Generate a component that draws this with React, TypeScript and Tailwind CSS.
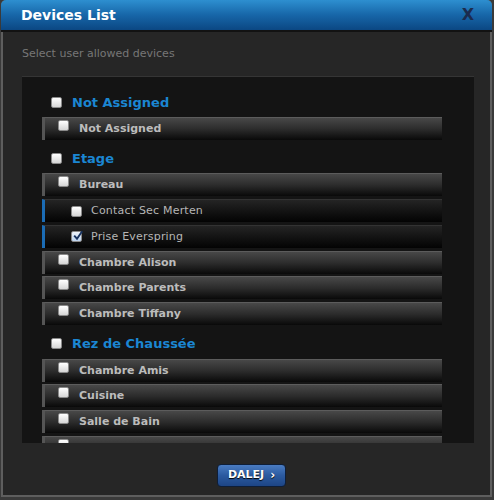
type Item =
  | { kind: 'group'; label: string }
  | { kind: 'room'; label: string }
  | { kind: 'device'; label: string; checked?: boolean }

const items: Item[] = [
  { kind: 'group', label: 'Not Assigned' },
  { kind: 'room', label: 'Not Assigned' },
  { kind: 'group', label: 'Etage' },
  { kind: 'room', label: 'Bureau' },
  { kind: 'device', label: 'Contact Sec Merten' },
  { kind: 'device', label: 'Prise Everspring', checked: true },
  { kind: 'room', label: 'Chambre Alison' },
  { kind: 'room', label: 'Chambre Parents' },
  { kind: 'room', label: 'Chambre Tiffany' },
  { kind: 'group', label: 'Rez de Chaussée' },
  { kind: 'room', label: 'Chambre Amis' },
  { kind: 'room', label: 'Cuisine' },
  { kind: 'room', label: 'Salle de Bain' },
  { kind: 'room', label: '' },
]

function Box({ checked }: { checked?: boolean }) {
  return (
    <span
      className={
        'relative block w-[11px] h-[11px] shrink-0 rounded-[2px] border border-[#8a8a8a] ' +
        (checked ? 'bg-gradient-to-b from-[#eef4fb] to-[#bcd3ee]' : 'bg-gradient-to-b from-white to-[#d6d6d6]')
      }
    >
      {checked && (
        <svg viewBox="0 0 10 10" className="absolute left-[1px] top-[-2px] w-[10px] h-[11px]">
          <path d="M1.2 5.2 L4 8.2 L9.2 0.8" fill="none" stroke="#17325f" strokeWidth="1.9" />
        </svg>
      )}
    </span>
  )
}

function Row({ item }: { item: Item }) {
  if (item.kind === 'group') {
    return (
      <div className="flex items-center h-[30.5px] pl-[9px] pt-[1px]">
        <Box />
        <span className="ml-[10px] text-[13px] font-bold text-[#1b86d2]">{item.label}</span>
      </div>
    )
  }
  if (item.kind === 'room') {
    return (
      <div className="flex h-[23px] mb-[2.8px] border-t border-[#5c5c5c] border-l-[3px] border-l-[#555] bg-[linear-gradient(#484848,#2c2c2c_50%,#090909)]">
        <div className="pl-[13px] pt-[2px]">
          <Box />
        </div>
        <span className="ml-[10px] mt-[4px] text-[11px] font-bold text-[#bcbcbc] leading-[14px]">{item.label}</span>
      </div>
    )
  }
  return (
    <div className="flex items-center h-[23px] mb-[2.8px] border-t border-[#333] border-l-[3px] border-l-[#1b6cb5] bg-[linear-gradient(#242424,#101010_60%,#030303)]">
      <div className="pl-[26px]">
        <Box checked={item.checked} />
      </div>
      <span className="ml-[9px] text-[11px] text-[#b6b6b6] tracking-[0.2px]">{item.label}</span>
    </div>
  )
}

export default function App() {
  return (
    <div className="w-[494px] h-[500px] bg-[#3a3a3a] overflow-hidden" style={{ fontFamily: '"DejaVu Sans", Verdana, sans-serif' }}>
      <div className="ml-[1px] w-[491px] h-[497px] flex flex-col bg-[#262626] border-x-2 border-b-2 border-[#5e5e5e] rounded-t-[5px]">
        {/* Title bar */}
        <div className="flex items-center justify-between h-[32px] -mx-[2px] px-[20px] rounded-t-[5px] bg-[linear-gradient(#2d8fd0,#1766a8_50%,#0b4783)] border-b-2 border-[#121212]">
          <span className="text-[14px] font-bold text-white">Devices List</span>
          <span className="text-[16px] font-bold text-[#1b2b4d] mr-[-2px]">X</span>
        </div>

        <div className="pl-[19px] pt-[14px] text-[11px] text-[#777]">Select user allowed devices</div>

        {/* List */}
        <div className="mt-[13px] ml-[19px] mr-[16px] h-[367px] bg-[#141414] border-t border-[#353535] overflow-hidden">
          <div className="pt-[10px] pr-[32px] pl-[20px]">
            {items.map((it, i) => (
              <Row key={i} item={it} />
            ))}
          </div>
        </div>

        {/* Footer */}
        <div className="flex justify-center pt-[21px] pl-[10px]">
          <button className="flex items-center gap-[6px] h-[23px] px-[10px] rounded-[4px] border border-[#0e1e38] bg-[linear-gradient(#4a7cc2,#2b5aa0_50%,#1d4585)] text-[11px] font-bold text-white [text-shadow:0_1px_1px_#000]">
            DALEJ
            <span className="text-[12px]">›</span>
          </button>
        </div>
      </div>
    </div>
  )
}
